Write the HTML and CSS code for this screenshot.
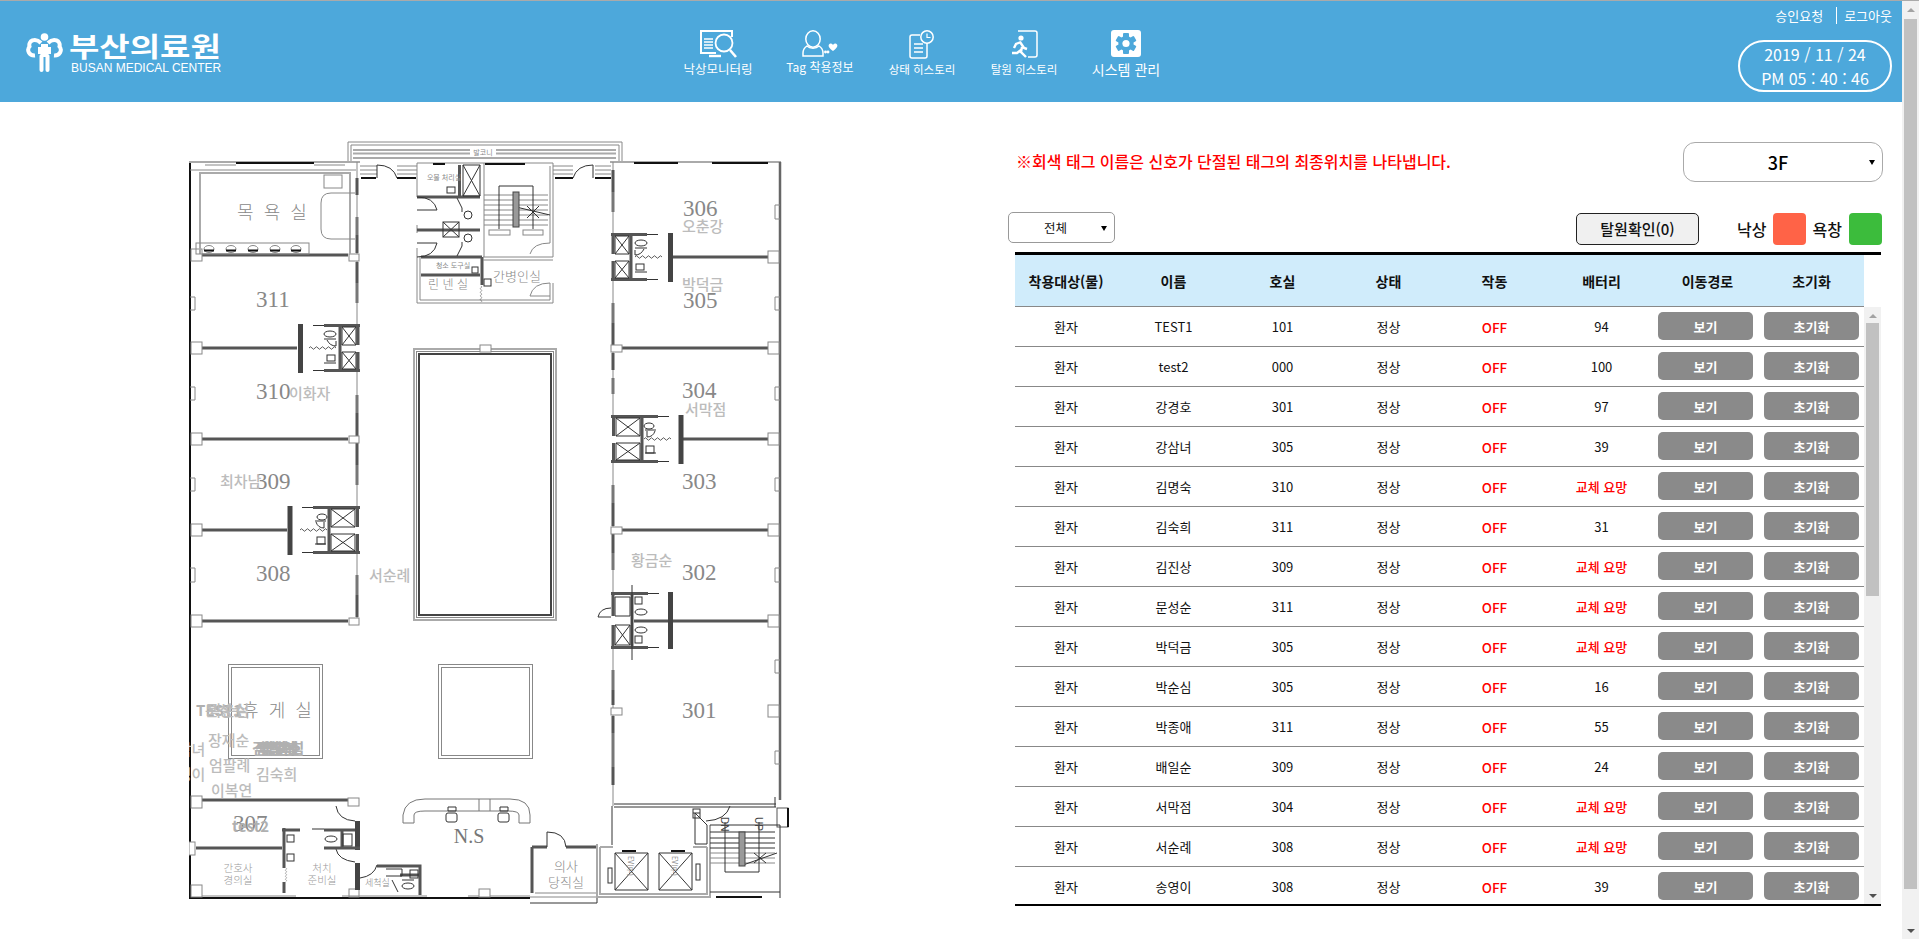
FILE: index.html
```html
<!DOCTYPE html>
<html lang="ko">
<head>
    <meta charset="UTF-8">
    <title>부산의료원</title>
    <link rel="stylesheet" href="styles.css">
</head>
<body>
<div class="window">
    <div class="page">
        <header class="top">
            <a class="logo" href="#">
                <svg class="logo-mark" width="38" height="39" viewBox="0 0 38 39">
                    <circle cx="18.5" cy="4" r="3.8" fill="#fff"/>
                    <path d="M15 10C9 4 2 8 3.5 13.5C0.5 17 3 23 9 22.5" class="logo-arm"/>
                    <path d="M22 10C28 4 35 8 33.5 13.5C36.5 17 34 23 28 22.5" class="logo-arm"/>
                    <path d="M15 11h7v3h3v7h-3v3h-7v-3h-3v-7h3z" fill="#fff"/>
                    <rect x="13.5" y="21" width="4" height="18" rx="2" fill="#fff"/>
                    <rect x="19.5" y="21" width="4" height="18" rx="2" fill="#fff"/>
                </svg>
                <div class="logo-text">
                    <div class="logo-kr">부산의료원</div>
                    <div class="logo-en">BUSAN MEDICAL CENTER</div>
                </div>
            </a>
            <nav class="nav">
                <a class="nav-item" href="#">
                    <span class="nav-icon">
                        <svg width="37" height="28" viewBox="0 0 37 28" fill="none" stroke="#fff">
                            <path d="M32 7V1H1V23H16" stroke-width="2"/>
                            <path d="M4 9h9M4 12h9M4 15h9M4 18h9" stroke-width="1.6"/>
                            <path d="M9 26H21" stroke-width="2.4"/>
                            <circle cx="24" cy="13" r="8.5" stroke-width="1.8"/>
                            <path d="M30 20L36 27" stroke-width="2.6"/>
                        </svg>
                    </span>
                    <span class="nav-label">낙상모니터링</span>
                </a>
                <a class="nav-item" href="#">
                    <span class="nav-icon">
                        <svg width="36" height="27" viewBox="0 0 36 27" fill="none" stroke="#fff" stroke-width="1.5">
                            <ellipse cx="11" cy="9" rx="7.2" ry="8.2"/>
                            <path d="M5 16C2 18 1 20 1 23V26H21V23C21 20 20 18 17 16C14 19 8 19 5 16Z"/>
                            <circle cx="23.5" cy="22" r="0.7" fill="#fff"/>
                            <circle cx="26" cy="22" r="0.7" fill="#fff"/>
                            <path d="M31 21C27 18 26 16 27 14.5C28 13 30 13.5 31 15C32 13.5 34 13 35 14.5C36 16 35 18 31 21Z" fill="#fff" stroke="none"/>
                        </svg>
                    </span>
                    <span class="nav-label nav-label-small">Tag 착용정보</span>
                </a>
                <a class="nav-item" href="#">
                    <span class="nav-icon">
                        <svg width="26" height="29" viewBox="0 0 26 29" fill="none" stroke="#fff" stroke-width="1.5">
                            <path d="M11 5H3Q1 5 1 7V26Q1 28 3 28H16Q18 28 18 26V13"/>
                            <path d="M5 14H14M5 18H14M5 22H14" stroke-width="1.4"/>
                            <circle cx="18" cy="7" r="6.2"/>
                            <path d="M18 3.5V7.5H21.5" stroke-width="1.2"/>
                        </svg>
                    </span>
                    <span class="nav-label nav-label-tight">상태 히스토리</span>
                </a>
                <a class="nav-item" href="#">
                    <span class="nav-icon">
                        <svg width="27" height="28" viewBox="0 0 27 28" fill="none" stroke="#fff">
                            <path d="M7 1H24Q26 1 26 3V25Q26 27 24 27H17" stroke-width="1.5"/>
                            <circle cx="10" cy="8" r="2.6" fill="#fff" stroke="none"/>
                            <path d="M9 12L13 18L16 19M10 12L5 14L3 18M11 17L10 22L15 27M10 20L6 23L1 23" stroke-width="2.4"/>
                        </svg>
                    </span>
                    <span class="nav-label nav-label-tight">탈원 히스토리</span>
                </a>
                <a class="nav-item" href="#">
                    <span class="nav-icon">
                        <svg width="30" height="27" viewBox="0 0 30 27">
                            <rect width="30" height="27" rx="3" fill="#fff"/>
                            <g fill="#4da8db">
                                <circle cx="15" cy="13.5" r="7.6"/>
                                <rect x="12" y="3" width="6" height="21" rx="1"/>
                                <rect x="12" y="3" width="6" height="21" rx="1" transform="rotate(60 15 13.5)"/>
                                <rect x="12" y="3" width="6" height="21" rx="1" transform="rotate(120 15 13.5)"/>
                            </g>
                            <circle cx="15" cy="13.5" r="3.6" fill="#fff"/>
                        </svg>
                    </span>
                    <span class="nav-label nav-label-wide">시스템 관리</span>
                </a>
            </nav>
            <div class="top-right">
                <div class="user-links">
                    <a href="#">승인요청</a>
                    <a class="logout" href="#">로그아웃</a>
                </div>
                <div class="clock">
                    <div>2019 / 11 / 24</div>
                    <div>PM 05 : 40 : 46</div>
                </div>
            </div>
        </header>

        <main class="main">
            <section class="plan-side">
                <svg class="plan" width="610" height="770" viewBox="189 140 610 770">
                    <defs>
                        <path id="wave" d="M0 0q1.5-2.5 3 0t3 0t3 0t3 0t3 0t3 0t3 0t3 0t3 0" fill="none" stroke="#333" stroke-width=".8"/>
                        <g id="wc-a">
                            <path class="dk" d="M2 0V48M0 1.5H36M0 46.5H36M20 0V48M59.500 0V49"/>
                            <path class="k1" d="M36 1.500H47M36 46.500H47"/>
                            <path class="dk5" d="M59.500 0V49"/>
                            <rect class="blank" x="0" y="21" width="18" height="7"/>
                            <path class="k1" d="M4 3H18V21H4ZM4 3L18 21M18 3L4 21M4 28H18V45H4ZM4 28L18 45M18 28L4 45"/>
                            <ellipse class="k1" cx="30" cy="10" rx="6" ry="3"/>
                            <path class="k1" d="M24 15H36M24 39H36M24 17V22Q30 22 33 16"/>
                            <rect class="k1" x="25" y="31" width="8" height="6"/>
                            <use href="#wave" x="24" y="24"/>
                        </g>
                        <g id="wc-b">
                            <path class="dk" d="M2.500 0V48M0 1.500H47M0 46.500H47M31 0V48"/>
                            <path class="k1" d="M47 1.500H58M47 46.500H58"/>
                            <path class="dk5" d="M70 0V49"/>
                            <rect class="blank" x="0" y="21" width="29" height="7"/>
                            <path class="k1" d="M5 3H29V21H5ZM5 3L29 21M29 3L5 21M5 28H29V45H5ZM5 28L29 45M29 28L5 45"/>
                            <ellipse class="k1" cx="38" cy="11" rx="5" ry="3"/>
                            <path class="k1" d="M34 15H45M34 38H45M36 16V22Q42 22 44 16"/>
                            <rect class="k1" x="35" y="31" width="8" height="7"/>
                            <use href="#wave" x="33" y="24"/>
                        </g>
                        <rect id="post" class="post" x="0" y="-6" width="11" height="12"/>
                    </defs>

                    <!-- balcony -->
                    <path class="g1" d="M348 162V142H622V162M351 162V145H619V162"/>
                    <path class="g2" d="M353 150H470M496 150H616M353 153.500H470M496 153.500H616M353 158H616"/>
                    <path class="g1" d="M360 166H377M360 170H377M360 174H377M397 166H417M397 170H417M397 174H417M553 166H573M553 170H573M553 174H573M595 166H611M595 170H611M595 174H611"/>
                    <path class="k2" d="M361 178H376M397 178H416M555 178H573M595 178H611"/>
                    <path class="k1" d="M377 178V165Q393 165 397 178M573 178Q577 165 593 165V178"/>

                    <!-- outer walls -->
                    <path class="k2" d="M190 162V898H530"/>
                    <path class="g2" d="M189 162H360M610 162H781"/>
                    <path class="g1" d="M190 170H356M205 165H236M314 165H345"/>
                    <path class="k2" d="M236 163H314M634 163H678M712 163H768"/>
                    <path class="wall-r" d="M780 162V800"/>

                    <!-- window bits on the outer walls -->
                    <path class="g1" d="M190 297H195V310H190M190 387H195V400H190M190 478H195V491H190M190 568H195V582H190M780 205H775V219H780M780 297H775V310H780M780 387H775V400H780M780 478H775V491H780M780 568H775V582H780M780 660H775V673H780M780 751H775V764H780"/>

                    <!-- room dividers -->
                    <path class="dk" d="M202 255H348M202 348H297M202 439H348M202 530H287M202 621H348M202 800H348M673 257H768M622 348H768M683 439H768M622 530H768M634 621H768M196 848H282"/>

                    <!-- corridor walls -->
                    <path class="g1" d="M357 162V625M613 162V806"/>
                    <path class="md" d="M357 217V235M357 283V303M357 395V413M357 465V485M357 575V595M613 192V212M613 303V323M613 378V394M613 485V503M613 553V570M613 670V690M613 733V767"/>
                    <path class="dk" d="M357 178V195M357 235V253M357 262V283M357 413V437M357 443V465M357 595V617M613 170V192M613 323V345M613 353V370M613 503V526M613 534V553M613 690V705M613 716V733M613 767V785"/>

                    <!-- posts -->
                    <rect class="post" x="349" y="254" width="10" height="7"/>
                    <rect class="post" x="349" y="436" width="10" height="7"/>
                    <rect class="post" x="349" y="618" width="10" height="7"/>
                    <rect class="post" x="348" y="798" width="11" height="8"/>
                    <rect class="post" x="349" y="889" width="10" height="8"/>
                    <rect class="post" x="611" y="345" width="11" height="7"/>
                    <rect class="post" x="611" y="527" width="11" height="7"/>
                    <rect class="post" x="611" y="708" width="11" height="7"/>
                    <use href="#post" x="191" y="255"/>
                    <use href="#post" x="191" y="348"/>
                    <use href="#post" x="191" y="439"/>
                    <use href="#post" x="191" y="530"/>
                    <use href="#post" x="191" y="621"/>
                    <use href="#post" x="191" y="802"/>
                    <use href="#post" x="191" y="891"/>
                    <use href="#post" x="768" y="257"/>
                    <use href="#post" x="768" y="348"/>
                    <use href="#post" x="768" y="439"/>
                    <use href="#post" x="768" y="530"/>
                    <use href="#post" x="768" y="621"/>
                    <use href="#post" x="768" y="711"/>
                    <rect class="post" x="189" y="842" width="6" height="13"/>

                    <!-- bathroom 목욕실 -->
                    <path class="g2" d="M200 254V173H350V254"/>
                    <rect class="g1" x="324" y="175" width="18" height="13"/>
                    <path class="g1" d="M355 193H331Q321 193 321 203V229Q321 239 331 239H355"/>
                    <rect class="g1" x="196" y="243" width="113" height="11"/>
                    <g class="g1">
                        <ellipse cx="209" cy="249" rx="5" ry="3.500"/>
                        <ellipse cx="231" cy="249" rx="5" ry="3.500"/>
                        <ellipse cx="253" cy="249" rx="5" ry="3.500"/>
                        <ellipse cx="275" cy="249" rx="5" ry="3.500"/>
                        <ellipse cx="296" cy="249" rx="5" ry="3.500"/>
                    </g>
                    <path class="k2" d="M204 250.500H214M226 250.500H236M248 250.500H258M270 250.500H280M291 250.500H301"/>

                    <!-- toilet units along the wings -->
                    <use href="#wc-a" transform="translate(360 324) scale(-1 1)"/>
                    <use href="#wc-b" transform="translate(360 506) scale(-1 1)"/>
                    <use href="#wc-a" transform="translate(611 233)"/>
                    <use href="#wc-b" transform="translate(611 415)"/>

                    <!-- unit between 302 and 301 -->
                    <path class="dk" d="M613 592V649M611 593.500H648M611 647.500H648M632 592V649"/>
                    <path class="dk5" d="M670.500 592V649"/>
                    <path class="k1" d="M648 593.500H659M648 647.500H659M632 585V660"/>
                    <rect class="blank" x="611" y="616" width="19" height="9"/>
                    <path class="k1" d="M615 597H630V616H615ZM615 625H630V645H615ZM615 625L630 645M630 625L615 645"/>
                    <rect class="k1" x="635" y="597" width="7" height="7"/>
                    <ellipse class="k1" cx="641" cy="612" rx="6" ry="3"/>
                    <ellipse class="k1" cx="641" cy="630" rx="6" ry="3"/>
                    <rect class="k1" x="635" y="636" width="7" height="7"/>
                    <path class="k1" d="M611 617H598Q600 608 611 608"/>

                    <!-- core: sluice, linen, stairs -->
                    <path class="g1" d="M553 257V163H417V197M417 257V303H553V283M417 197H421M417 225V233M417 248V257"/>
                    <path class="g1" d="M420 257V300H550V283M484 163V257M550 166V243"/>
                    <path class="k2" d="M433 164H445M485 164H525"/>
                    <path class="dk" d="M417 197H480M459.500 165V197M421 257H482M421 275H480M482 257V285M417 230H480"/>
                    <path class="k1" d="M463 165H480V196H463ZM463 165L480 196M480 165L463 196"/>
                    <path class="k1" d="M417 197Q434 197 437 210H417M417 257Q434 257 437 243H417"/>
                    <circle class="k1" cx="468" cy="215" r="4"/>
                    <circle class="k1" cx="468" cy="238" r="4"/>
                    <rect class="k1" x="443" y="222" width="16" height="15"/>
                    <path class="k1" d="M443 222L459 237M459 222L443 237"/>
                    <rect class="k1" x="447" y="187" width="8" height="6"/>
                    <path class="k1" d="M457 198L462 208V212M457 256L462 246V242"/>
                    <rect class="k1" x="472" y="267" width="6" height="6"/>
                    <rect class="k1" x="484" y="279" width="7" height="7"/>
                    <use href="#wave" transform="translate(481 286) rotate(90) scale(.6)"/>
                    <path class="g1" d="M484 195H548M484 200H548M484 205H548M484 210H548M484 215H548M484 220H548M484 225H548"/>
                    <path class="k1" d="M499 229V186H533V229M516 207L550 215"/>
                    <rect class="mid" x="513" y="192" width="6" height="35"/>
                    <path class="k1" d="M527 206L539 218M539 206L527 218"/>
                    <rect class="g1" x="489" y="230" width="21" height="5"/>
                    <rect class="g1" x="523" y="230" width="20" height="5"/>
                    <path class="g1" d="M483 257H553M483 260H553M530 254Q533 243 550 243M530 296Q533 283 550 283M530 296H550"/>
                    <text class="plan-note" x="444" y="180" text-anchor="middle">오물 처리실</text>
                    <text class="plan-note" x="453" y="268" text-anchor="middle">청소 도구실</text>
                    <text class="plan-note" x="483" y="155" text-anchor="middle">발코니</text>

                    <!-- central void -->
                    <rect class="g2" x="414" y="349" width="142" height="271"/>
                    <rect class="g1" x="416.500" y="351.500" width="137" height="266"/>
                    <rect class="k2thin" x="419" y="354" width="132" height="261"/>
                    <rect class="post" x="480" y="345" width="11" height="7"/>

                    <!-- rest rooms -->
                    <rect class="g1" x="228.500" y="664.500" width="94" height="94"/>
                    <rect class="g1" x="231.500" y="667.500" width="88" height="88"/>
                    <rect class="g1" x="438.500" y="664.500" width="94" height="94"/>
                    <rect class="g1" x="441.500" y="667.500" width="88" height="88"/>

                    <!-- room 307 block -->
                    <path class="k1" d="M336 806Q338 820 355 821M336 849Q338 860 355 862"/>
                    <path class="dk5" d="M357.500 821V850M357.500 863V890"/>
                    <path class="dk" d="M284 828V868M284 882V893M282 830H300M324 830H355M324 848H360M342 830V848"/>
                    <path class="k1" d="M312 829H324"/>
                    <rect class="k1" x="287" y="835" width="7" height="7"/>
                    <rect class="k1" x="287" y="854" width="7" height="7"/>
                    <rect class="k1" x="343" y="834" width="9" height="12"/>
                    <ellipse class="k1" cx="331" cy="839" rx="6" ry="3"/>
                    <use href="#wave" transform="translate(286 868) rotate(90) scale(.5)"/>

                    <!-- 세척실 -->
                    <path class="dk" d="M377 866H420V895M400 875H420"/>
                    <path class="k1" d="M360 878Q374 876 377 865M386 869H402V876H386M392 880L398 892M414 880H402"/>
                    <rect class="k1" x="410" y="870" width="8" height="8"/>
                    <ellipse class="k1" cx="408" cy="886" rx="6" ry="3"/>

                    <!-- bottom wall -->
                    <path class="g1" d="M202 896H296M342 896H427M468 896H530M535 893H597"/>
                    <path class="k1" d="M530 903H597V897"/>
                    <path class="g1" d="M530 897H597"/>
                    <path class="dk" d="M532 847V893M532 847H547M566 847H597"/>
                    <path class="k1" d="M547 847V832Q565 832 566 847"/>
                    <rect class="post" x="479" y="889" width="11" height="8"/>

                    <!-- nurse station -->
                    <path class="k1gray" d="M403 823V815Q405 799 425 799H510Q530 799 530 815V823H519V815Q519 811 508 811H425Q414 811 414 815V823ZM479 799V811M490 799V811"/>
                    <g class="k1">
                        <rect x="446" y="813" width="11" height="9" rx="2"/>
                        <rect x="498" y="813" width="11" height="9" rx="2"/>
                        <path d="M448 807H456V811H448ZM500 807H508V811H500Z"/>
                    </g>

                    <!-- lobby, lifts, stairs -->
                    <path class="k1" d="M614 804H776M614 807H776M612 806V845M775 797V807"/>
                    <rect class="blank-line" x="777" y="808" width="11" height="19"/>
                    <path class="k2" d="M788 808V827"/>
                    <path class="g2" d="M597 844V897H710V825M600 847V894H707V847M600 847H613M707 847H693"/>
                    <path class="k1" d="M710 825H780V898M710 892H780"/>
                    <path class="k2" d="M716 897H762"/>
                    <path class="k2" d="M622 851H636M671 851H685"/>
                    <path class="k1" d="M615 853H648V890H615ZM615 853L648 890M648 853L615 890M659 853H692V890H659ZM659 853L692 890M692 853L659 890"/>
                    <path class="k1" d="M710 832H775M710 838H775M710 843H775M710 848H775"/>
                    <path class="g1" d="M710 853H775M710 858H775M710 863H775"/>
                    <path class="k1" d="M725 822V872H759V822M743 865L777 853M754 853L766 863M766 853L754 863"/>
                    <rect class="mid" x="739" y="832" width="6" height="34"/>
                    <rect class="k1" x="693" y="809" width="7" height="9"/>
                    <path class="k1" d="M693 813H700M707 825L695 813V844M707 825V844M707 844H695"/>
                    <path class="k1" d="M706 821Q726 820 730 806"/>
                    <rect class="k1" x="608" y="868" width="4" height="15"/>
                    <rect class="k1" x="696" y="864" width="4" height="16"/>
                    <text class="plan-note" transform="translate(628 856) rotate(90)">EV(中)</text>
                    <text class="plan-note" transform="translate(672 856) rotate(90)">EV(中)</text>
                    <text class="plan-stair" transform="translate(721 817) rotate(90)">DN</text>
                    <text class="plan-stair" transform="translate(755 817) rotate(90)">UP</text>

                    <!-- printed room names -->
                    <text class="room-kr" x="272" y="219" text-anchor="middle" xml:space="preserve">목  욕  실</text>
                    <text class="room-sm" x="448" y="289" text-anchor="middle" xml:space="preserve">린 넨 실</text>
                    <text class="room-md" x="517" y="281" text-anchor="middle">간병인실</text>
                    <text class="room-kr" x="277" y="717" text-anchor="middle" xml:space="preserve">휴  게  실</text>
                    <text class="room-xs" x="238" y="872" text-anchor="middle">간호사</text>
                    <text class="room-xs" x="238" y="884" text-anchor="middle">경의실</text>
                    <text class="room-xs" x="322" y="872" text-anchor="middle">처치</text>
                    <text class="room-xs" x="322" y="884" text-anchor="middle">준비실</text>
                    <text class="room-xxs" x="365" y="886">세척실</text>
                    <text class="room-md" x="566" y="871" text-anchor="middle">의사</text>
                    <text class="room-md" x="566" y="887" text-anchor="middle">당직실</text>
                    <text class="room-ns" x="469" y="843" text-anchor="middle">N.S</text>

                    <text class="room" x="256" y="307">311</text>
                    <text class="room" x="256" y="399">310</text>
                    <text class="room" x="256" y="489">309</text>
                    <text class="room" x="256" y="581">308</text>
                    <text class="room" x="233" y="831">307</text>
                    <text class="room" x="683" y="216">306</text>
                    <text class="room" x="683" y="308">305</text>
                    <text class="room" x="682" y="398">304</text>
                    <text class="room" x="682" y="489">303</text>
                    <text class="room" x="682" y="580">302</text>
                    <text class="room" x="682" y="718">301</text>

                    <!-- tag positions -->
                    <text class="tag" x="289" y="399">이화자</text>
                    <text class="tag" x="682" y="232">오춘강</text>
                    <text class="tag" x="682" y="290">박덕금</text>
                    <text class="tag" x="685" y="415">서막점</text>
                    <text class="tag" x="220" y="487">최차남</text>
                    <text class="tag" x="369" y="581">서순례</text>
                    <text class="tag" x="631" y="566">황금순</text>
                    <text class="tag tag-bold" x="196" y="716">TEST1</text>
                    <text class="tag" x="205" y="716">문성순</text>
                    <text class="tag" x="208" y="716">박순심</text>
                    <text class="tag" x="208" y="746">장재순</text>
                    <text class="tag" x="164" y="755">강삼녀</text>
                    <text class="tag" x="209" y="771">엄팔례</text>
                    <text class="tag" x="164" y="780">송영이</text>
                    <text class="tag" x="256" y="780">김숙희</text>
                    <text class="tag" x="211" y="796">이복연</text>
                    <text class="tag tag-bold" x="252" y="754">김명숙</text>
                    <text class="tag tag-bold" x="255" y="754">김진상</text>
                    <text class="tag tag-bold" x="257" y="754">박종애</text>
                    <text class="tag tag-bold" x="259" y="754">배일순</text>
                    <text class="tag tag-bold" x="261" y="754">강경호</text>
                    <text class="tag tag-bold" x="263" y="754">박순심</text>
                    <text class="tag tag-bold" x="232" y="832">test2</text>
                </svg>
            </section>

            <section class="panel">
                <div class="panel-top">
                    <p class="notice">※회색 태그 이름은 신호가 단절된 태그의 최종위치를 나타냅니다.</p>
                    <select class="floor-select">
                        <option>3F</option>
                        <option>2F</option>
                        <option>1F</option>
                    </select>
                </div>
                <div class="panel-tools">
                    <select class="filter-select">
                        <option>전체</option>
                    </select>
                    <button class="leave-btn">탈원확인(0)</button>
                    <span class="legend-label">낙상</span>
                    <span class="swatch swatch-fall"></span>
                    <span class="legend-label">욕창</span>
                    <span class="swatch swatch-sore"></span>
                </div>
                <div class="grid">
                    <table class="grid-table grid-head">
                        <colgroup>
                            <col class="c1"><col class="c2"><col class="c3"><col class="c4"><col class="c5"><col class="c6"><col class="c7"><col class="c8">
                        </colgroup>
                        <tr>
                            <th>착용대상(물)</th><th>이름</th><th>호실</th><th>상태</th><th>작동</th><th>배터리</th><th>이동경로</th><th>초기화</th>
                        </tr>
                    </table>
                    <div class="grid-body">
                        <div class="grid-rows">
                            <table class="grid-table">
                                <colgroup>
                                    <col class="c1"><col class="c2"><col class="c3"><col class="c4"><col class="c5"><col class="c6"><col class="c7"><col class="c8">
                                </colgroup>
                                <tr><td>환자</td><td>TEST1</td><td>101</td><td>정상</td><td class="off">OFF</td><td>94</td><td class="btn-cell"><button class="row-btn btn-left">보기</button></td><td class="btn-cell"><button class="row-btn btn-right">초기화</button></td></tr>
                                <tr><td>환자</td><td>test2</td><td>000</td><td>정상</td><td class="off">OFF</td><td>100</td><td class="btn-cell"><button class="row-btn btn-left">보기</button></td><td class="btn-cell"><button class="row-btn btn-right">초기화</button></td></tr>
                                <tr><td>환자</td><td>강경호</td><td>301</td><td>정상</td><td class="off">OFF</td><td>97</td><td class="btn-cell"><button class="row-btn btn-left">보기</button></td><td class="btn-cell"><button class="row-btn btn-right">초기화</button></td></tr>
                                <tr><td>환자</td><td>강삼녀</td><td>305</td><td>정상</td><td class="off">OFF</td><td>39</td><td class="btn-cell"><button class="row-btn btn-left">보기</button></td><td class="btn-cell"><button class="row-btn btn-right">초기화</button></td></tr>
                                <tr><td>환자</td><td>김명숙</td><td>310</td><td>정상</td><td class="off">OFF</td><td class="low">교체 요망</td><td class="btn-cell"><button class="row-btn btn-left">보기</button></td><td class="btn-cell"><button class="row-btn btn-right">초기화</button></td></tr>
                                <tr><td>환자</td><td>김숙희</td><td>311</td><td>정상</td><td class="off">OFF</td><td>31</td><td class="btn-cell"><button class="row-btn btn-left">보기</button></td><td class="btn-cell"><button class="row-btn btn-right">초기화</button></td></tr>
                                <tr><td>환자</td><td>김진상</td><td>309</td><td>정상</td><td class="off">OFF</td><td class="low">교체 요망</td><td class="btn-cell"><button class="row-btn btn-left">보기</button></td><td class="btn-cell"><button class="row-btn btn-right">초기화</button></td></tr>
                                <tr><td>환자</td><td>문성순</td><td>311</td><td>정상</td><td class="off">OFF</td><td class="low">교체 요망</td><td class="btn-cell"><button class="row-btn btn-left">보기</button></td><td class="btn-cell"><button class="row-btn btn-right">초기화</button></td></tr>
                                <tr><td>환자</td><td>박덕금</td><td>305</td><td>정상</td><td class="off">OFF</td><td class="low">교체 요망</td><td class="btn-cell"><button class="row-btn btn-left">보기</button></td><td class="btn-cell"><button class="row-btn btn-right">초기화</button></td></tr>
                                <tr><td>환자</td><td>박순심</td><td>305</td><td>정상</td><td class="off">OFF</td><td>16</td><td class="btn-cell"><button class="row-btn btn-left">보기</button></td><td class="btn-cell"><button class="row-btn btn-right">초기화</button></td></tr>
                                <tr><td>환자</td><td>박종애</td><td>311</td><td>정상</td><td class="off">OFF</td><td>55</td><td class="btn-cell"><button class="row-btn btn-left">보기</button></td><td class="btn-cell"><button class="row-btn btn-right">초기화</button></td></tr>
                                <tr><td>환자</td><td>배일순</td><td>309</td><td>정상</td><td class="off">OFF</td><td>24</td><td class="btn-cell"><button class="row-btn btn-left">보기</button></td><td class="btn-cell"><button class="row-btn btn-right">초기화</button></td></tr>
                                <tr><td>환자</td><td>서막점</td><td>304</td><td>정상</td><td class="off">OFF</td><td class="low">교체 요망</td><td class="btn-cell"><button class="row-btn btn-left">보기</button></td><td class="btn-cell"><button class="row-btn btn-right">초기화</button></td></tr>
                                <tr><td>환자</td><td>서순례</td><td>308</td><td>정상</td><td class="off">OFF</td><td class="low">교체 요망</td><td class="btn-cell"><button class="row-btn btn-left">보기</button></td><td class="btn-cell"><button class="row-btn btn-right">초기화</button></td></tr>
                                <tr><td>환자</td><td>송영이</td><td>308</td><td>정상</td><td class="off">OFF</td><td>39</td><td class="btn-cell"><button class="row-btn btn-left">보기</button></td><td class="btn-cell"><button class="row-btn btn-right">초기화</button></td></tr>
                            </table>
                        </div>
                        <div class="bar bar-list">
                            <span class="bar-up"></span>
                            <span class="bar-thumb"></span>
                            <span class="bar-rest"></span>
                            <span class="bar-down"></span>
                        </div>
                    </div>
                </div>
            </section>
        </main>
    </div>
    <div class="bar bar-page">
        <span class="bar-up"></span>
        <span class="bar-thumb"></span>
        <span class="bar-rest"></span>
        <span class="bar-down"></span>
    </div>
</div>
</body>
</html>
```
FILE: styles.css
```css
html, body {
    margin: 0;
    padding: 0;
    height: 100%;
    overflow: hidden;
}
body {
    font-family: "Noto Sans CJK KR", "Noto Sans", sans-serif;
    color: #111;
    background: #fff;
}
a {
    color: inherit;
    text-decoration: none;
}

.window {
    display: flex;
    height: 938px;
    border-top: 1px solid #aaa;
}
.page {
    width: 1902px;
    flex: none;
}

/* header */
.top {
    display: flex;
    height: 101px;
    background: #4da8db;
    color: #fff;
}
.logo {
    display: flex;
    width: 641px;
    padding: 32px 0 0 26px;
    gap: 5px;
}
.logo-arm {
    fill: none;
    stroke: #fff;
    stroke-width: 4;
}
.logo-kr {
    font-size: 33px;
    font-weight: 700;
    line-height: 25px;
    letter-spacing: 0;
    white-space: nowrap;
    transform: scaleY(0.82);
}
.logo-en {
    font-family: "Liberation Sans", sans-serif;
    font-size: 12px;
    line-height: 12px;
    margin: 4px 0 0 2px;
    white-space: nowrap;
}
.nav {
    display: flex;
}
.nav-item {
    display: flex;
    flex-direction: column;
    align-items: center;
    width: 102px;
    padding-top: 29px;
}
.nav-icon {
    display: flex;
    align-items: flex-start;
    height: 31px;
}
.nav-label {
    font-size: 12.5px;
    line-height: 16px;
    white-space: nowrap;
}
.nav-label-small {
    font-size: 12px;
    margin-top: -2px;
}
.nav-label-tight {
    font-size: 11.5px;
}
.nav-label-wide {
    font-size: 14px;
}
.top-right {
    display: flex;
    flex-direction: column;
    align-items: flex-end;
    margin-left: auto;
    padding-right: 10px;
}
.user-links {
    display: flex;
    align-items: center;
    font-size: 13px;
    height: 17px;
    margin-top: 6px;
}
.logout {
    margin-left: 13px;
    padding-left: 7px;
    border-left: 1.5px solid #fff;
    line-height: 17px;
}
.clock {
    box-sizing: border-box;
    width: 154px;
    height: 52px;
    margin-top: 16px;
    border: 2px solid #fff;
    border-radius: 26px;
    text-align: center;
    font-size: 16px;
    line-height: 24px;
}

/* floor plan */
.main {
    display: flex;
}
.plan-side {
    box-sizing: border-box;
    width: 1008px;
    padding: 38px 0 0 189px;
}
.plan {
    display: block;
}
.k1 { fill: none; stroke: #333; stroke-width: 1; }
.k2 { fill: none; stroke: #111; stroke-width: 2; }
.k2thin { fill: none; stroke: #444; stroke-width: 2; }
.k1gray { fill: none; stroke: #777; stroke-width: 1; }
.g1 { fill: none; stroke: #888; stroke-width: 1; }
.g2 { fill: none; stroke: #aaa; stroke-width: 2; }
.md { fill: none; stroke: #777; stroke-width: 3; }
.dk { fill: none; stroke: #555; stroke-width: 3; }
.dk5 { fill: none; stroke: #444; stroke-width: 5; }
.wall-r { fill: none; stroke: #666; stroke-width: 2.5; }
.post { fill: #fff; stroke: #888; stroke-width: 1; }
.blank { fill: #fff; stroke: none; }
.blank-line { fill: #fff; stroke: #555; stroke-width: 1; }
.mid { fill: #999; stroke: #444; stroke-width: 1; }

.room {
    font-family: "Liberation Serif", serif;
    font-size: 23px;
    fill: #888;
}
.room-ns {
    font-family: "Liberation Serif", serif;
    font-size: 20px;
    fill: #777;
}
.room-kr {
    font-size: 18px;
    font-weight: 300;
    fill: #888;
}
.room-md {
    font-size: 13px;
    font-weight: 300;
    fill: #888;
}
.room-sm {
    font-size: 12px;
    font-weight: 300;
    fill: #888;
}
.room-xs {
    font-size: 10.5px;
    font-weight: 300;
    fill: #999;
}
.room-xxs {
    font-size: 9px;
    font-weight: 300;
    fill: #888;
}
.plan-note {
    font-size: 7px;
    fill: #888;
}
.plan-stair {
    font-family: "Liberation Sans", sans-serif;
    font-size: 10px;
    fill: #444;
}
.tag {
    font-size: 15px;
    font-weight: 500;
    fill: #bcbcbc;
}
.tag-bold {
    font-weight: 700;
    fill: #b0b0b0;
}

/* right panel */
.panel {
    width: 875px;
    padding-top: 40px;
}
.panel-top {
    display: flex;
    align-items: center;
    justify-content: space-between;
    height: 40px;
    padding-left: 8px;
}
.notice {
    margin: 0 0 2px 0;
    font-size: 16px;
    font-weight: 500;
    color: #f00;
}
.floor-select {
    appearance: none;
    width: 200px;
    height: 40px;
    padding-right: 10px;
    border: 1px solid #aaa;
    border-radius: 12px;
    background: #fff url("data:image/svg+xml,%3Csvg xmlns='http://www.w3.org/2000/svg' width='6' height='6'%3E%3Cpath d='M0 1H6L3 6Z'/%3E%3C/svg%3E") no-repeat right 7px center;
    color: #000;
    font-family: inherit;
    font-size: 18px;
    font-weight: 500;
    text-align: center;
    text-align-last: center;
}
.panel-tools {
    display: flex;
    align-items: center;
    height: 33px;
    margin-top: 30px;
}
.filter-select {
    appearance: none;
    width: 107px;
    height: 31px;
    margin-bottom: 2px;
    border: 1px solid #999;
    border-radius: 5px;
    background: #fff url("data:image/svg+xml,%3Csvg xmlns='http://www.w3.org/2000/svg' width='6' height='6'%3E%3Cpath d='M0 1H6L3 6Z'/%3E%3C/svg%3E") no-repeat right 7px center;
    color: #111;
    font-family: inherit;
    font-size: 12.5px;
    text-align: center;
    text-align-last: center;
    padding-right: 12px;
}
.leave-btn {
    width: 123px;
    height: 32px;
    margin-left: 461px;
    border: 1px solid #222;
    border-radius: 5px;
    background: #f0f0f0;
    color: #111;
    font-family: inherit;
    font-size: 15px;
    font-weight: 500;
    padding: 0;
}
.legend-label {
    margin: 0 7px 0 38px;
    font-size: 16px;
    font-weight: 500;
}
.swatch + .legend-label {
    margin-left: 6px;
}
.swatch {
    width: 33px;
    height: 32px;
    border-radius: 4px;
}
.swatch-fall {
    background: #ff6347;
}
.swatch-sore {
    background: #3cbc3c;
}

/* patient table */
.grid {
    width: 866px;
    margin: 7px 0 0 7px;
    border-top: 3px solid #000;
    border-bottom: 2px solid #000;
}
.grid-table {
    table-layout: fixed;
    width: 849px;
    border-collapse: separate;
    border-spacing: 0;
}
.c1 { width: 102px; }
.c2 { width: 113px; }
.c3 { width: 105px; }
.c4 { width: 107px; }
.c5 { width: 105px; }
.c6 { width: 109px; }
.c7 { width: 103px; }
.c8 { width: 105px; }
.grid-head th {
    box-sizing: border-box;
    height: 52px;
    background: #d0ecfb;
    border-bottom: 1px solid #888;
    font-size: 14px;
    font-weight: 700;
    padding: 0;
}
.grid-body {
    display: flex;
    height: 597px;
    overflow: hidden;
}
.grid-rows {
    width: 849px;
}
.grid-table td {
    box-sizing: border-box;
    height: 40px;
    padding: 0;
    border-bottom: 1px solid #888;
    font-size: 13px;
    font-weight: 400;
    text-align: center;
}
.grid-table td.off {
    color: #f00;
    font-size: 13.5px;
    font-weight: 500;
}
.grid-table td.low {
    color: #f00;
    font-size: 13px;
    font-weight: 500;
}
.grid-table td.btn-cell {
    padding-top: 5px;
    vertical-align: top;
}
.row-btn {
    display: block;
    width: 95px;
    height: 28px;
    padding: 0;
    border: 0;
    border-radius: 5px;
    background: #8a8a8a;
    color: #fff;
    font-family: inherit;
    font-size: 13px;
    font-weight: 700;
}
.btn-left {
    margin-left: 2px;
}
.btn-right {
    margin-left: 5px;
}

/* drawn scrollbars */
.bar {
    display: flex;
    flex-direction: column;
    align-items: center;
    background: #f1f1f1;
}
.bar-page {
    width: 17px;
}
.bar-list {
    width: 17px;
}
.bar-up,
.bar-down {
    display: flex;
    align-items: center;
    justify-content: center;
    flex: none;
    height: 17px;
}
.bar-up::before {
    content: "";
    border: 4px solid transparent;
    border-top: 0;
    border-bottom: 4px solid #a3a3a3;
}
.bar-down::before {
    content: "";
    border: 4px solid transparent;
    border-bottom: 0;
    border-top: 4px solid #505050;
}
.bar-thumb {
    flex: none;
    width: 13px;
    background: #c1c1c1;
}
.bar-page .bar-thumb {
    height: 870px;
    margin-top: 1px;
}
.bar-list .bar-thumb {
    height: 273px;
    margin-top: -1px;
}
.bar-rest {
    flex: 1;
}
```
